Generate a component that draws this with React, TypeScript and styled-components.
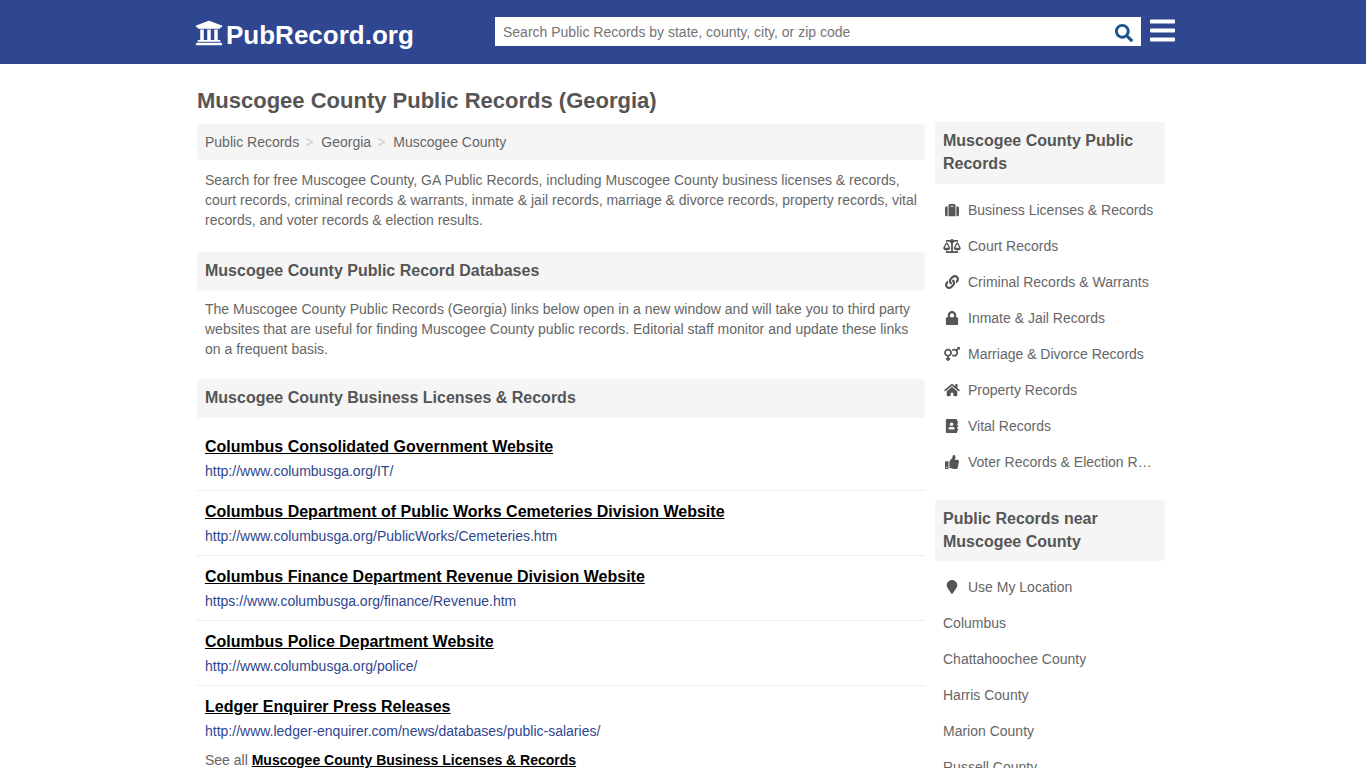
import React from "react";
import styled, { createGlobalStyle } from "styled-components";
import { FaUniversity, FaSearch, FaBars, FaSuitcase, FaBalanceScale, FaLink, FaLock, FaVenusMars, FaHome, FaAddressBook, FaThumbsUp, FaMapMarker } from "react-icons/fa";

const Global = createGlobalStyle`
  html, body { margin: 0; padding: 0; height: 768px; overflow: hidden; background: #fff; }
  body { font-family: "Liberation Sans", Arial, sans-serif; color: #555; font-size: 14px; line-height: 20px; }
  * { box-sizing: border-box; }
`;
const Header = styled.header`
  height: 64px; background: #2f4690; display: flex; align-items: flex-start;
  padding-left: 195px;
`;
const Logo = styled.a`
  display: flex; align-items: center; width: 300px; height: 64px; color: #fff;
  font-size: 26px; font-weight: 700; text-decoration: none; padding-top: 6px;
  svg { width: 28px; height: 28px; margin-right: 3px; margin-top: -4px; }
`;
const SearchBox = styled.div`
  margin-top: 17px; width: 646px; height: 29px; background: #fff; display: flex; align-items: center;
  justify-content: space-between; padding: 0 8px 0 8px; font-size: 14px; color: #757575;
  svg { width: 18px; height: 18px; color: #17518f; margin-top: 2px; }
`;
const Burger = styled(FaBars)`
  width: 25px; height: 29px; color: #fff; margin: 16px 0 0 9px;
`;
const Page = styled.div`
  width: 968px; margin-left: 197px; display: flex; flex-direction: column;
`;
const Title = styled.h1`
  margin: 0; padding-top: 24px; height: 60px; font-size: 22px; line-height: 25px; font-weight: 700; color: #555;
`;
const Columns = styled.div`
  display: flex; gap: 10px; align-items: flex-start;
`;
const Main = styled.main` width: 728px; flex: none; `;
const Crumbs = styled.nav`
  height: 36px; background: #f5f5f5; border-radius: 3px; display: flex; align-items: center;
  padding: 0 8px; color: #666;
`;
const Sep = styled.span` color: #ccc; margin: 0 8px 0 6px; `;
const Para = styled.p<{ $top: number; $bottom: number }>`
  margin: 0; padding: ${p => p.$top}px 8px ${p => p.$bottom}px; color: #666;
`;
const SectionHead = styled.h2`
  margin: 0; height: 39px; background: #f5f5f5; border-radius: 3px; padding: 0 8px 2px;
  display: flex; align-items: center; font-size: 16px; font-weight: 700; color: #555;
`;
const List = styled.div` padding-top: 8px; `;
const Item = styled.div`
  height: 65px; padding: 11px 8px 0; border-bottom: 1px solid #eee;
  &:last-child { border-bottom: 0; height: 64px; }
`;
const ItemTitle = styled.a`
  display: block; color: #000; font-size: 16px; font-weight: 700; text-decoration: underline; line-height: 20px;
`;
const ItemUrl = styled.a`
  display: block; color: #2f4690; font-size: 14px; line-height: 20px; margin-top: 4px; text-decoration: none;
`;
const SeeAll = styled.div`
  padding: 0 8px; line-height: 20px; color: #666;
  a { color: #000; font-weight: 700; text-decoration: underline; }
`;
const Side = styled.aside` width: 230px; flex: none; margin-top: -2px; `;
const SideHead = styled.h3`
  margin: 0; padding: 7px 8px 8.5px; background: #f5f5f5; border-radius: 3px; font-size: 16px; line-height: 23px; font-weight: 700; color: #555;
`;
const SideList = styled.div`
  padding-top: 8px; padding-bottom: 20px;
`;
const SideRow = styled.div`
  height: 36px; display: flex; align-items: center; padding-left: 8px; color: #666;
  svg { width: 18px; height: 14px; color: #555; margin-right: 7px; flex: none; }
`;
const SideText = styled.span`
  white-space: nowrap; overflow: hidden; text-overflow: ellipsis; max-width: 186px;
`;

const items = [
  ["Columbus Consolidated Government Website", "http://www.columbusga.org/IT/"],
  ["Columbus Department of Public Works Cemeteries Division Website", "http://www.columbusga.org/PublicWorks/Cemeteries.htm"],
  ["Columbus Finance Department Revenue Division Website", "https://www.columbusga.org/finance/Revenue.htm"],
  ["Columbus Police Department Website", "http://www.columbusga.org/police/"],
  ["Ledger Enquirer Press Releases", "http://www.ledger-enquirer.com/news/databases/public-salaries/"],
];
const records: [React.ComponentType, string][] = [
  [FaSuitcase, "Business Licenses & Records"],
  [FaBalanceScale, "Court Records"],
  [FaLink, "Criminal Records & Warrants"],
  [FaLock, "Inmate & Jail Records"],
  [FaVenusMars, "Marriage & Divorce Records"],
  [FaHome, "Property Records"],
  [FaAddressBook, "Vital Records"],
  [FaThumbsUp, "Voter Records & Election Results"],
];
const near = ["Columbus", "Chattahoochee County", "Harris County", "Marion County", "Russell County"];

export default function App() {
  return (
    <>
      <Global />
      <Header>
        <Logo><FaUniversity />PubRecord.org</Logo>
        <SearchBox>Search Public Records by state, county, city, or zip code<FaSearch /></SearchBox>
        <Burger />
      </Header>
      <Page>
        <Title>Muscogee County Public Records (Georgia)</Title>
        <Columns>
          <Main>
            <Crumbs>Public Records<Sep>&gt;</Sep>Georgia<Sep>&gt;</Sep>Muscogee County</Crumbs>
            <Para $top={10} $bottom={22}>Search for free Muscogee County, GA Public Records, including Muscogee County business licenses &amp; records, court records, criminal records &amp; warrants, inmate &amp; jail records, marriage &amp; divorce records, property records, vital records, and voter records &amp; election results.</Para>
            <SectionHead>Muscogee County Public Record Databases</SectionHead>
            <Para $top={8} $bottom={20}>The Muscogee County Public Records (Georgia) links below open in a new window and will take you to third party websites that are useful for finding Muscogee County public records. Editorial staff monitor and update these links on a frequent basis.</Para>
            <SectionHead>Muscogee County Business Licenses &amp; Records</SectionHead>
            <List>
              {items.map(([t, u]) => (
                <Item key={t}><ItemTitle>{t}</ItemTitle><ItemUrl>{u}</ItemUrl></Item>
              ))}
            </List>
            <SeeAll>See all <a>Muscogee County Business Licenses &amp; Records</a></SeeAll>
          </Main>
          <Side>
            <SideHead>Muscogee County Public Records</SideHead>
            <SideList>
              {records.map(([I, t]) => (
                <SideRow key={t}><I /><SideText>{t}</SideText></SideRow>
              ))}
            </SideList>
            <SideHead>Public Records near Muscogee County</SideHead>
            <SideList>
              <SideRow><FaMapMarker /><SideText>Use My Location</SideText></SideRow>
              {near.map(t => <SideRow key={t}><SideText>{t}</SideText></SideRow>)}
            </SideList>
          </Side>
        </Columns>
      </Page>
    </>
  );
}
